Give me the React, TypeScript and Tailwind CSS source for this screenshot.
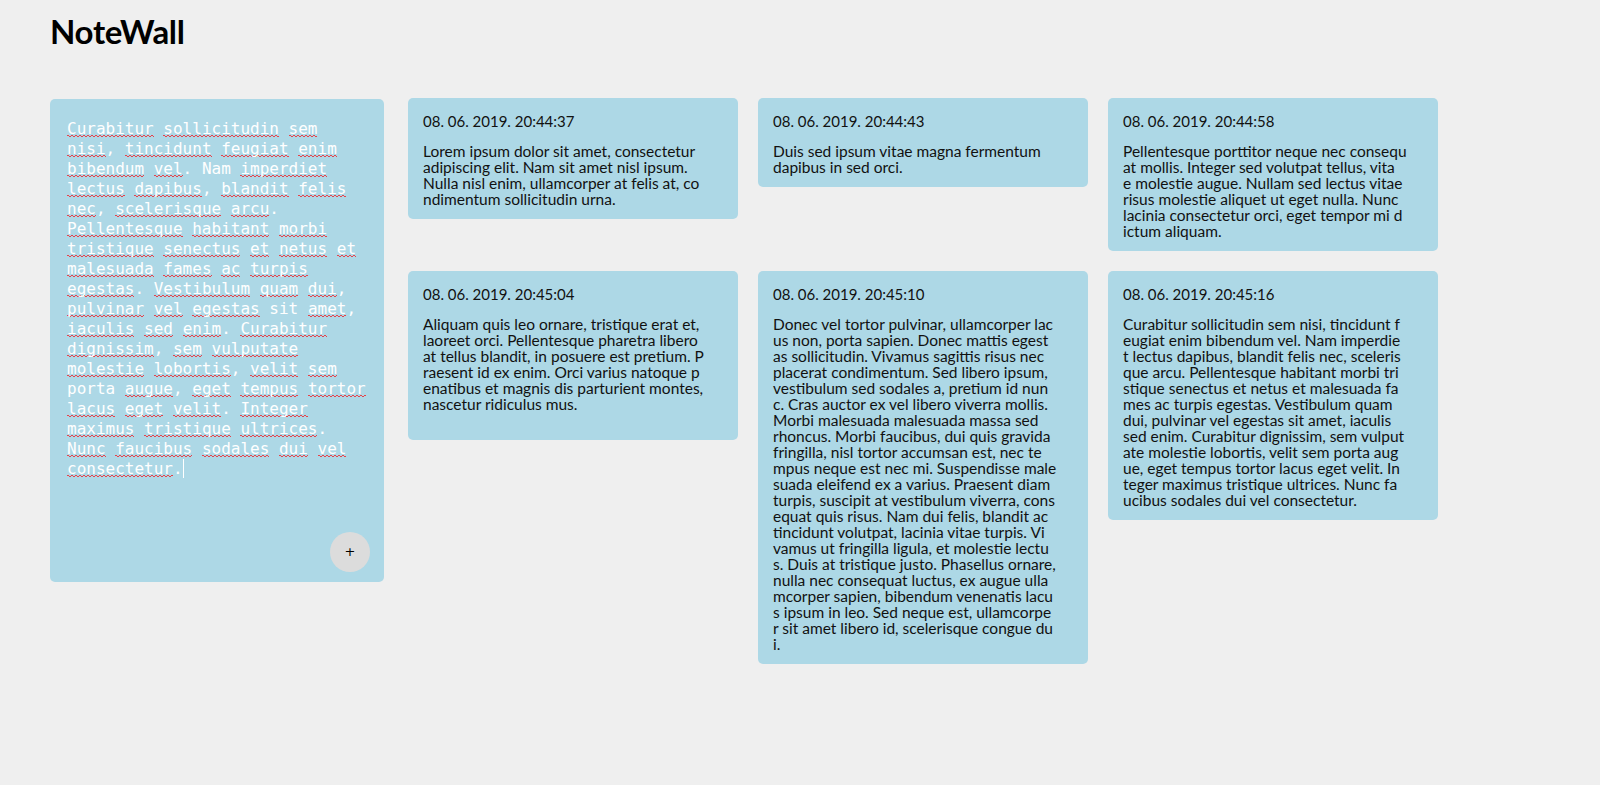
import React from "react";

const notes: { date: string; lines: string[] }[] = [
  {
    date: "08. 06. 2019. 20:44:37",
    lines: [
      "Lorem ipsum dolor sit amet, consectetur",
      "adipiscing elit. Nam sit amet nisl ipsum.",
      "Nulla nisl enim, ullamcorper at felis at, co",
      "ndimentum sollicitudin urna.",
    ],
  },
  {
    date: "08. 06. 2019. 20:44:43",
    lines: ["Duis sed ipsum vitae magna fermentum", "dapibus in sed orci."],
  },
  {
    date: "08. 06. 2019. 20:44:58",
    lines: [
      "Pellentesque porttitor neque nec consequ",
      "at mollis. Integer sed volutpat tellus, vita",
      "e molestie augue. Nullam sed lectus vitae",
      "risus molestie aliquet ut eget nulla. Nunc",
      "lacinia consectetur orci, eget tempor mi d",
      "ictum aliquam.",
    ],
  },
  {
    date: "08. 06. 2019. 20:45:04",
    lines: [
      "Aliquam quis leo ornare, tristique erat et,",
      "laoreet orci. Pellentesque pharetra libero",
      "at tellus blandit, in posuere est pretium. P",
      "raesent id ex enim. Orci varius natoque p",
      "enatibus et magnis dis parturient montes,",
      "nascetur ridiculus mus.",
      "\u00a0",
    ],
  },
  {
    date: "08. 06. 2019. 20:45:10",
    lines: [
      "Donec vel tortor pulvinar, ullamcorper lac",
      "us non, porta sapien. Donec mattis egest",
      "as sollicitudin. Vivamus sagittis risus nec",
      "placerat condimentum. Sed libero ipsum,",
      "vestibulum sed sodales a, pretium id nun",
      "c. Cras auctor ex vel libero viverra mollis.",
      "Morbi malesuada malesuada massa sed",
      "rhoncus. Morbi faucibus, dui quis gravida",
      "fringilla, nisl tortor accumsan est, nec te",
      "mpus neque est nec mi. Suspendisse male",
      "suada eleifend ex a varius. Praesent diam",
      "turpis, suscipit at vestibulum viverra, cons",
      "equat quis risus. Nam dui felis, blandit ac",
      "tincidunt volutpat, lacinia vitae turpis. Vi",
      "vamus ut fringilla ligula, et molestie lectu",
      "s. Duis at tristique justo. Phasellus ornare,",
      "nulla nec consequat luctus, ex augue ulla",
      "mcorper sapien, bibendum venenatis lacu",
      "s ipsum in leo. Sed neque est, ullamcorpe",
      "r sit amet libero id, scelerisque congue du",
      "i.",
    ],
  },
  {
    date: "08. 06. 2019. 20:45:16",
    lines: [
      "Curabitur sollicitudin sem nisi, tincidunt f",
      "eugiat enim bibendum vel. Nam imperdie",
      "t lectus dapibus, blandit felis nec, sceleris",
      "que arcu. Pellentesque habitant morbi tri",
      "stique senectus et netus et malesuada fa",
      "mes ac turpis egestas. Vestibulum quam",
      "dui, pulvinar vel egestas sit amet, iaculis",
      "sed enim. Curabitur dignissim, sem vulput",
      "ate molestie lobortis, velit sem porta aug",
      "ue, eget tempus tortor lacus eget velit. In",
      "teger maximus tristique ultrices. Nunc fa",
      "ucibus sodales dui vel consectetur.",
    ],
  },
];

const editorLines = [
  "Curabitur sollicitudin sem",
  "nisi, tincidunt feugiat enim",
  "bibendum vel. Nam imperdiet",
  "lectus dapibus, blandit felis",
  "nec, scelerisque arcu.",
  "Pellentesque habitant morbi",
  "tristique senectus et netus et",
  "malesuada fames ac turpis",
  "egestas. Vestibulum quam dui,",
  "pulvinar vel egestas sit amet,",
  "iaculis sed enim. Curabitur",
  "dignissim, sem vulputate",
  "molestie lobortis, velit sem",
  "porta augue, eget tempus tortor",
  "lacus eget velit. Integer",
  "maximus tristique ultrices.",
  "Nunc faucibus sodales dui vel",
  "consectetur.",
];

const okWords = new Set(["Nam", "sit", "porta"]);

const squiggle =
  "[background-image:repeating-linear-gradient(90deg,#e8424a_0_2px,transparent_2px_4px),repeating-linear-gradient(90deg,transparent_0_2px,#e8424a_2px_4px)] [background-size:100%_1px,100%_1px] [background-position:0_calc(100%-2px),0_calc(100%-1px)] bg-no-repeat";

function EditorLine({ text, last }: { text: string; last: boolean }) {
  const tokens = text.split(/(\s+)/);
  return (
    <div className="h-[20px] whitespace-pre">
      {tokens.map((tok, i) => {
        if (/^\s+$/.test(tok) || tok === "") return <span key={i}>{tok}</span>;
        const m = tok.match(/^([A-Za-z]+)(.*)$/);
        if (!m) return <span key={i}>{tok}</span>;
        const word = m[1];
        const rest = m[2];
        return (
          <span key={i}>
            {okWords.has(word) ? <span>{word}</span> : <span className={squiggle}>{word}</span>}
            {rest}
          </span>
        );
      })}
      {last && <span className="inline-block w-px h-[19px] bg-white align-[-4px]" />}
    </div>
  );
}

export default function App() {
  return (
    <div className="min-h-[785px] w-full bg-[#efefef] pl-[50px] pt-[11px] font-['Lato',sans-serif] text-black">
      <h1 className="text-[33px] leading-[40px] font-bold tracking-[-0.3px] font-['Lato',sans-serif]">NoteWall</h1>
      <div className="mt-[47px] flex items-start gap-[24px]">
        <div className="relative mt-px h-[483px] w-[334px] shrink-0 rounded-[5px] bg-[#add8e6] pl-[17px] pt-[18px] font-['DejaVu_Sans_Mono',monospace] text-[16px] text-white">
          {editorLines.map((l, i) => (
            <EditorLine key={i} text={l} last={i === editorLines.length - 1} />
          ))}
          <button className="absolute bottom-[10px] right-[14px] flex h-[40px] w-[40px] items-center justify-center rounded-full bg-[#dcdcdc] text-[13px] text-black font-['DejaVu_Sans',sans-serif]">
            +
          </button>
        </div>
        <div className="grid w-[1030px] grid-cols-[330px_330px_330px] items-start gap-[20px]">
          {notes.map((n, i) => (
            <div key={i} className="rounded-[5px] bg-[#add8e6] px-[15px] pt-[15px] pb-[12px] text-[15.5px] leading-[16px] text-[#111]">
              <div className="h-[16px] whitespace-nowrap text-[15px]">{n.date}</div>
              <div className="mt-[14px]">
                {n.lines.map((l, j) => (
                  <div key={j} className="h-[16px] whitespace-nowrap">
                    {l}
                  </div>
                ))}
              </div>
            </div>
          ))}
        </div>
      </div>
    </div>
  );
}
